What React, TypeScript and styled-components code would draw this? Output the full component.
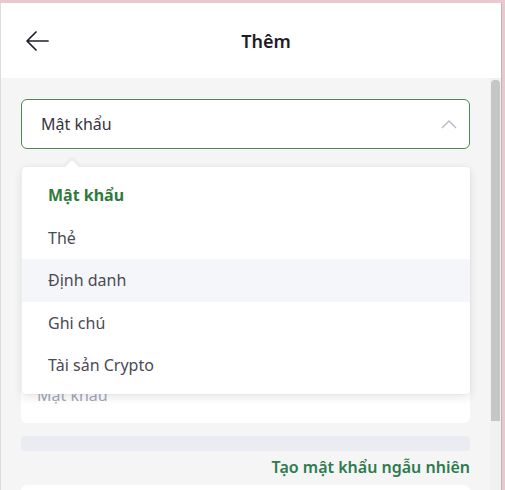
import styled, { createGlobalStyle } from "styled-components";

const GlobalStyle = createGlobalStyle`
  html, body {
    margin: 0;
    padding: 0;
    height: 100%;
    overflow: hidden;
  }
  body {
    background: #e9c9ce;
    font-family: "Noto Sans", "Open Sans", sans-serif;
  }
  * { box-sizing: border-box; }
`;

const Frame = styled.div`
  padding: 3px 3px 0 0;
  height: 490px;
`;

const Window = styled.div`
  display: flex;
  flex-direction: column;
  height: 100%;
  background: #f5f5f5;
  border-left: 1px solid #dcdcdc;
  border-right: 1px solid #b9b9b9;
  overflow: hidden;
`;

const Header = styled.header`
  flex-shrink: 0;
  display: grid;
  grid-template-columns: 60px 1fr 60px;
  align-items: center;
  height: 75px;
  background: #fff;
  padding-left: 24px;
`;

const BackButton = styled.button`
  border: 0;
  background: none;
  padding: 0;
  width: 26px;
  height: 26px;
  display: flex;
  align-items: center;
  color: #1f1f2b;
`;

const Title = styled.h1`
  margin: 0;
  text-align: center;
  font-size: 18px;
  font-weight: 600;
  color: #1d1d29;
  transform: translateX(3px);
`;

const Body = styled.div`
  flex: 1;
  display: flex;
  min-height: 0;
`;

const Main = styled.main`
  position: relative;
  flex: 1;
  display: flex;
  flex-direction: column;
  padding: 21px 20px 0 20px;

  & > * {
    flex-shrink: 0;
  }
`;

const Scrollbar = styled.div`
  width: 11px;
  background: #f1f1f1;
  padding: 2px 1px 0 1px;
`;

const Thumb = styled.div`
  height: 341px;
  background: #c6c6c6;
  border-radius: 4px 4px 0 0;
`;

const Select = styled.div`
  display: flex;
  align-items: center;
  justify-content: space-between;
  height: 50px;
  background: #fff;
  border: 1px solid #4d8a52;
  border-radius: 6px;
  padding: 0 12px 0 19px;
  font-size: 16px;
  color: #34343f;
`;

const Card = styled.div<{ $height: number }>`
  display: flex;
  flex-direction: column;
  justify-content: flex-end;
  margin-top: 19px;
  background: #fff;
  border-radius: 6px;
  height: ${(p) => p.$height}px;
  padding: 0 16px;
`;

const Placeholder = styled.div`
  font-size: 16px;
  color: #a3a7b8;
  padding-bottom: 17px;
`;

const Divider = styled.div`
  height: 15px;
  margin-top: 13px;
  background: #ebebf4;
  border-radius: 4px;
`;

const LinkText = styled.a`
  align-self: flex-end;
  margin-top: 5px;
  font-size: 16px;
  font-weight: 600;
  color: #2d7b4f;
  text-decoration: none;
`;

const NextCard = styled.div`
  margin-top: 7px;
  height: 40px;
  background: #fff;
  border-radius: 6px 6px 0 0;
`;

const Menu = styled.ul`
  position: absolute;
  top: 89px;
  left: 21px;
  right: 20px;
  margin: 0;
  padding: 7px 0;
  list-style: none;
  background: #fff;
  border-radius: 4px;
  box-shadow: 0 3px 10px rgba(40, 40, 60, 0.12), 0 0 2px rgba(40, 40, 60, 0.08);

  &::before {
    content: "";
    position: absolute;
    top: -5px;
    left: 45px;
    width: 10px;
    height: 10px;
    background: #fff;
    transform: rotate(45deg);
    box-shadow: -2px -2px 4px rgba(40, 40, 60, 0.06);
  }
`;

const Item = styled.li<{ $selected?: boolean; $hover?: boolean }>`
  position: relative;
  height: 42.5px;
  display: flex;
  align-items: center;
  padding-left: 26px;
  font-size: 16px;
  font-weight: ${(p) => (p.$selected ? 700 : 400)};
  color: ${(p) => (p.$selected ? "#2f7a3c" : "#4a4a55")};
  background: ${(p) => (p.$hover ? "#f5f6fa" : "transparent")};
`;

const items = ["Mật khẩu", "Thẻ", "Định danh", "Ghi chú", "Tài sản Crypto"];

function App() {
  return (
    <Frame>
      <GlobalStyle />
      <Window>
        <Header>
          <BackButton aria-label="Quay lại">
            <svg width="24" height="22" viewBox="0 0 24 22" fill="none">
              <path
                d="M23 11H3M11 2l-9 9 9 9"
                stroke="currentColor"
                strokeWidth="1.7"
                strokeLinecap="round"
                strokeLinejoin="round"
              />
            </svg>
          </BackButton>
          <Title>Thêm</Title>
          <span />
        </Header>
        <Body>
          <Main>
            <Select>
              Mật khẩu
              <svg width="16" height="10" viewBox="0 0 16 10" fill="none">
                <path d="M1 9l7-7 7 7" stroke="#b4bac8" strokeWidth="1.4" />
              </svg>
            </Select>
            <Card $height={255}>
              <Placeholder>Mật khẩu</Placeholder>
            </Card>
            <Divider />
            <LinkText href="#">Tạo mật khẩu ngẫu nhiên</LinkText>
            <NextCard />
            <Menu>
              {items.map((name, i) => (
                <Item key={name} $selected={i === 0} $hover={i === 2}>
                  {name}
                </Item>
              ))}
            </Menu>
          </Main>
          <Scrollbar>
            <Thumb />
          </Scrollbar>
        </Body>
      </Window>
    </Frame>
  );
}

export default App;
